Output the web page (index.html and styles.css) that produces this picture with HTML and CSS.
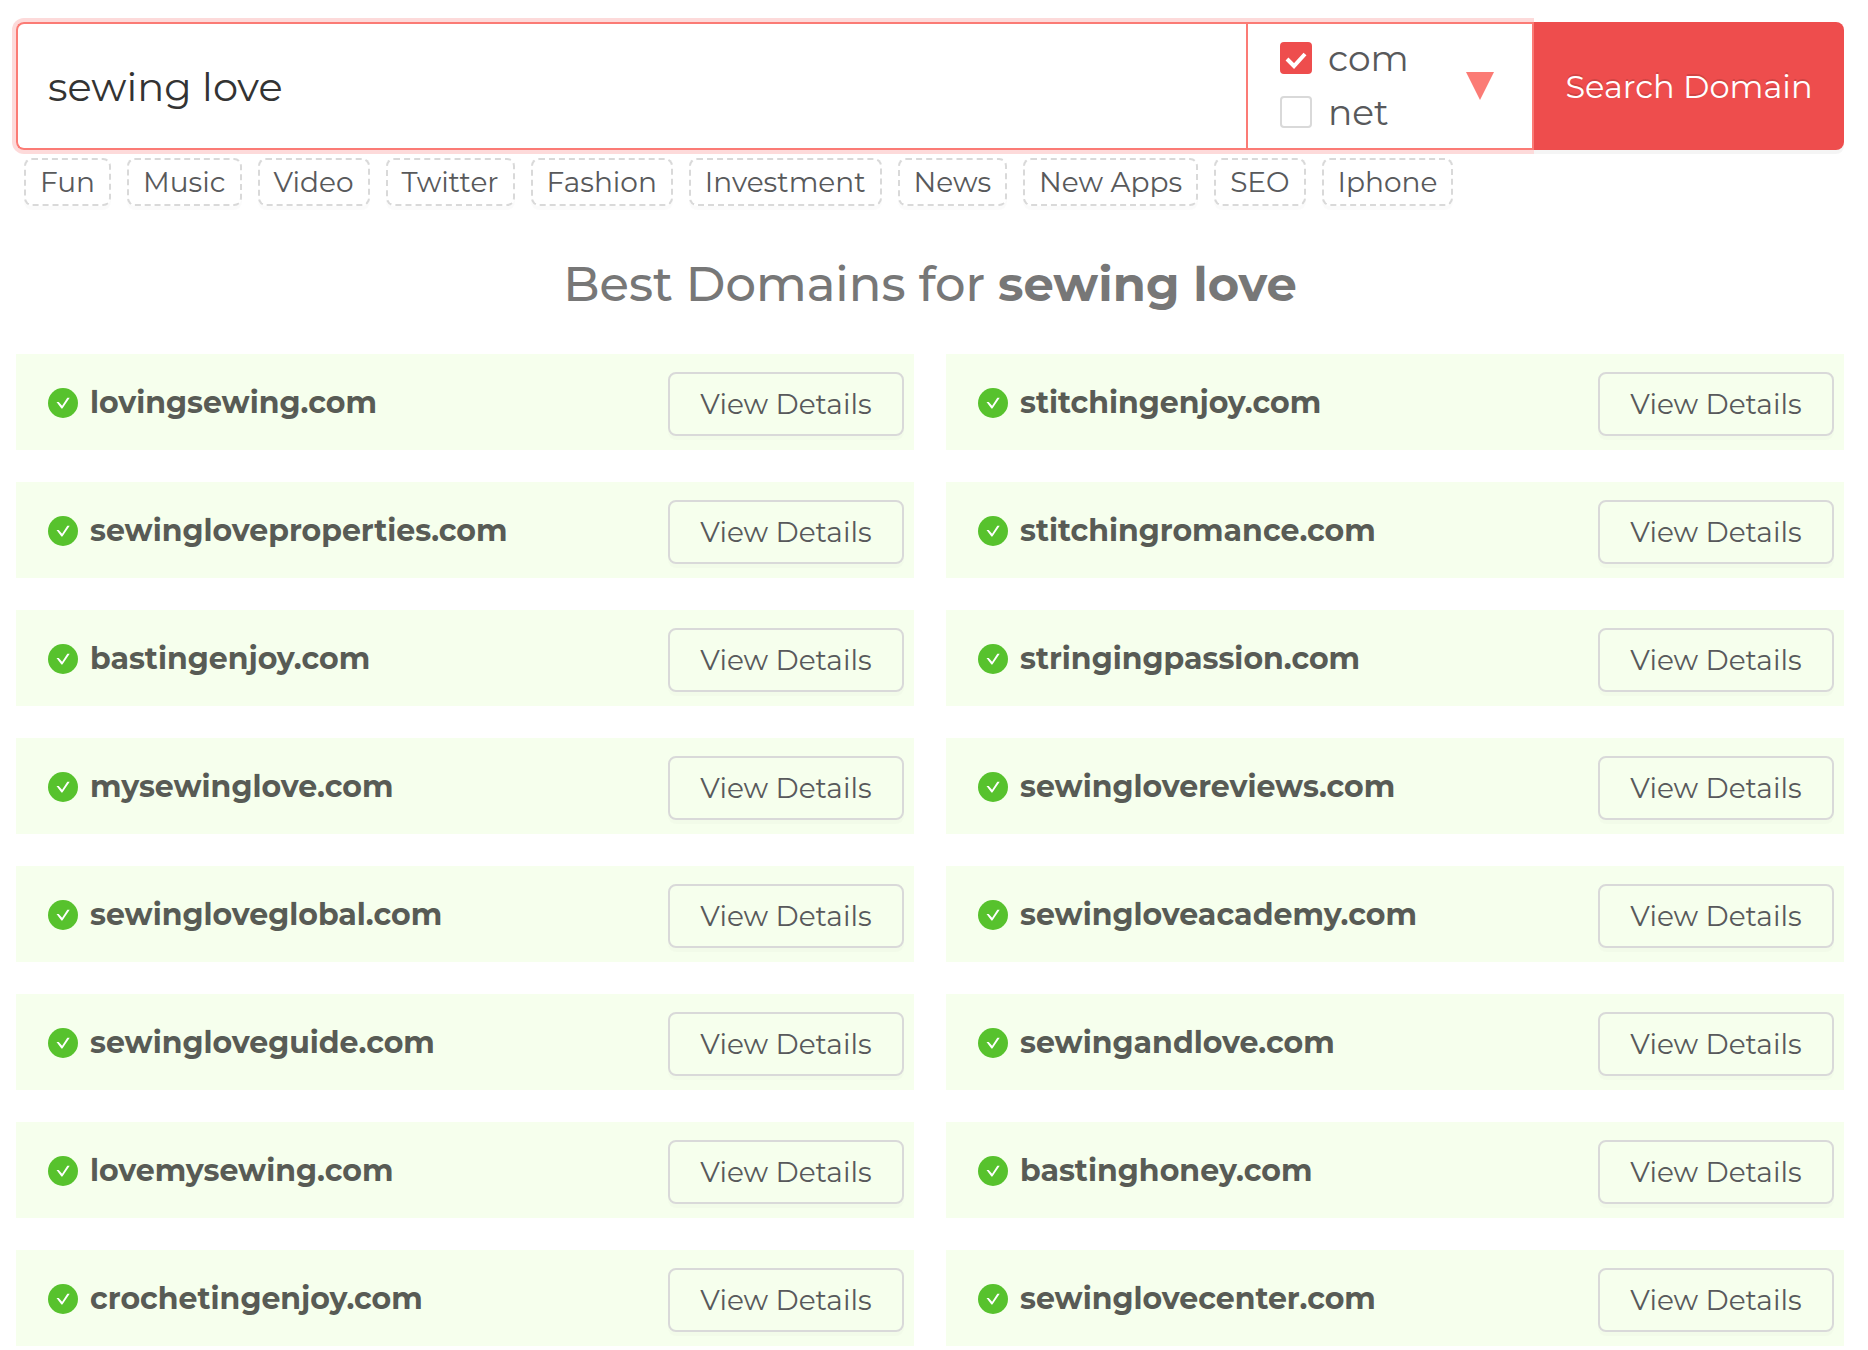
FILE: index.html
```html
<!DOCTYPE html>
<html lang="en">
    <head>
        <meta charset="utf-8">
        <meta name="viewport" content="width=device-width, initial-scale=1">
        <title>Domain Search</title>
        <link rel="stylesheet" href="styles.css">
    </head>
    <body>
        <form class="search">
            <div class="search-group">
                <input class="search-input" type="text" name="keyword" value="sewing love" aria-label="Keyword">
                <div class="extensions">
                    <div class="extension-list">
                        <label class="extension"><input type="checkbox" name="com" checked>com</label>
                        <label class="extension"><input type="checkbox" name="net">net</label>
                    </div>
                    <button type="button" class="toggle" aria-label="More extensions">
                        <svg width="28" height="28" viewBox="0 0 28 28"><path d="M0 0h28L14 28z" fill="#fb7b75"/></svg>
                    </button>
                </div>
            </div>
            <button type="submit" class="search-button">Search Domain</button>
        </form>

        <div class="tags">
            <button type="button" class="tag">Fun</button>
            <button type="button" class="tag">Music</button>
            <button type="button" class="tag">Video</button>
            <button type="button" class="tag">Twitter</button>
            <button type="button" class="tag">Fashion</button>
            <button type="button" class="tag">Investment</button>
            <button type="button" class="tag">News</button>
            <button type="button" class="tag">New Apps</button>
            <button type="button" class="tag">SEO</button>
            <button type="button" class="tag">Iphone</button>
        </div>

        <h2>Best Domains for <b>sewing love</b></h2>

        <div class="results" id="results"></div>

        <script src="script.js"></script>
    </body>
</html>
```
FILE: styles.css
```css
* {
    box-sizing: border-box;
}

body {
    font-family: Montserrat, Inter, sans-serif;
    font-weight: 400;
    color: #58595b;
    background-color: #fff;
    margin: 0;
    padding: 22px 24px 4px 16px;
}

button, input {
    font: inherit;
    color: inherit;
}

button {
    cursor: pointer;
}

.search {
    display: flex;
    height: 128px;
}

.search-group {
    flex: 1;
    display: flex;
    min-width: 0;
    border: 2px solid #fb7b75;
    border-right: none;
    border-radius: 8px 0 0 8px;
    box-shadow: 0 0 0 4px #fddada;
    clip-path: inset(-4px 0 -4px -4px);
}

.search-input {
    flex: 1;
    min-width: 0;
    padding: 0 30px;
    border: none;
    border-radius: 6px;
    outline: none;
    background: none;
    color: #333;
    font-size: 40px;
}

.extensions {
    display: flex;
    align-items: center;
    justify-content: space-between;
    width: 288px;
    padding: 0 38px 0 32px;
    border-left: 2px solid #fb7b75;
    border-right: 2px solid #fb7b75;
}

.extension-list {
    display: flex;
    flex-direction: column;
    gap: 10px;
    padding-bottom: 2px;
}

.extension {
    display: flex;
    align-items: center;
    gap: 16px;
    font-size: 36px;
    line-height: 44px;
}

.extension input {
    appearance: none;
    width: 32px;
    height: 32px;
    margin: 0;
    border: 2px solid #d9d9d9;
    border-radius: 4px;
    background-color: #fff;
}

.extension input:checked {
    border-color: #ee4d4d;
    background: #ee4d4d url("data:image/svg+xml,%3Csvg xmlns='http://www.w3.org/2000/svg' viewBox='0 0 28 28'%3E%3Cpath d='M5 15l7 7L23 10' fill='none' stroke='%23fff' stroke-width='4'/%3E%3C/svg%3E") center / 28px no-repeat;
}

.toggle {
    display: flex;
    padding: 0;
    border: none;
    background: none;
}

.search-button {
    width: 310px;
    border: none;
    border-radius: 0 8px 8px 0;
    background-color: #ee4d4d;
    box-shadow: 0 4px 0 rgba(0, 0, 0, 0.04);
    color: #fff;
    font-size: 32px;
    text-shadow: 0 -2px 0 rgba(0, 0, 0, 0.12);
}

.tags {
    display: flex;
    flex-wrap: wrap;
    gap: 16px;
    padding: 8px 8px 0;
}

.tag {
    height: 48px;
    padding: 0 14px;
    border: 2px dashed #d9d9d9;
    border-radius: 8px;
    background-color: #fff;
    box-shadow: 0 4px 0 rgba(0, 0, 0, 0.015);
    font-size: 28px;
    line-height: 44px;
}

h2 {
    margin: 48px 0 40px;
    color: #777;
    font-size: 48px;
    font-weight: 500;
    line-height: 60px;
    text-align: center;
}

h2 b {
    font-weight: 700;
}

.results {
    display: grid;
    grid-template-columns: 1fr 1fr;
    gap: 32px;
}

.domain {
    display: flex;
    align-items: center;
    height: 96px;
    padding: 0 10px 0 32px;
    background-color: #f6ffed;
}

.check {
    margin-top: 2px;
}

.domain-name {
    flex: 1;
    padding-left: 12px;
    color: #585b55;
    font-size: 30px;
    font-weight: 700;
}

.details {
    width: 236px;
    height: 64px;
    margin-top: 4px;
    border: 2px solid #d9d9d9;
    border-radius: 8px;
    background: none;
    box-shadow: 0 4px 0 rgba(0, 0, 0, 0.015);
    font-size: 28px;
}
```
FILE: script.js
```js
const domains = [
    "lovingsewing.com", "stitchingenjoy.com",
    "sewingloveproperties.com", "stitchingromance.com",
    "bastingenjoy.com", "stringingpassion.com",
    "mysewinglove.com", "sewinglovereviews.com",
    "sewingloveglobal.com", "sewingloveacademy.com",
    "sewingloveguide.com", "sewingandlove.com",
    "lovemysewing.com", "bastinghoney.com",
    "crochetingenjoy.com", "sewinglovecenter.com"
];

document.getElementById("results").innerHTML = domains.map((name) => `
    <div class="domain">
        <svg class="check" width="30" height="30" viewBox="0 0 30 30">
            <circle cx="15" cy="15" r="15" fill="#57c22d"/>
            <path d="M8.5 14h2.2l3.4 3.7 5.2-8h2.4l-7.3 10.8h-1z" fill="#fff"/>
        </svg>
        <span class="domain-name">${name}</span>
        <button type="button" class="details">View Details</button>
    </div>
`).join("");
```
